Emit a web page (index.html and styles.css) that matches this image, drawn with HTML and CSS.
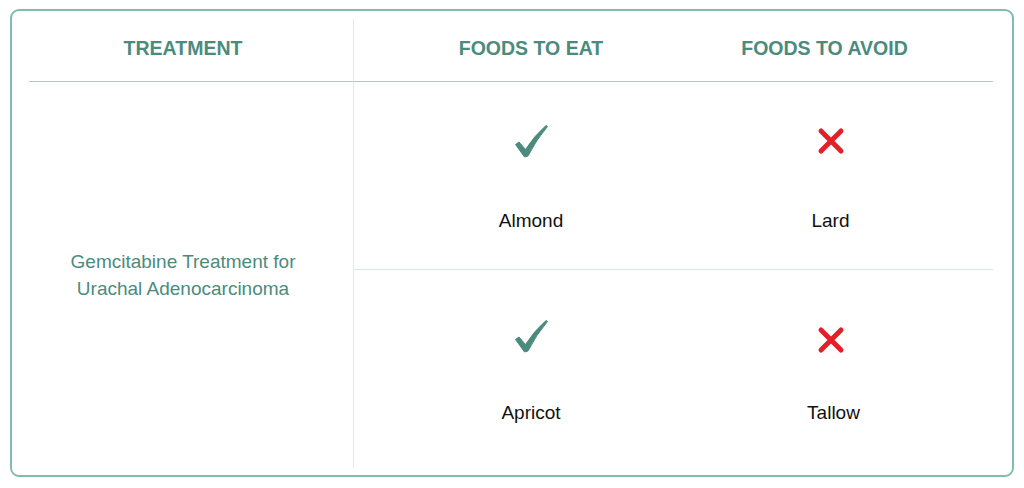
FILE: index.html
```html
<!DOCTYPE html>
<html lang="en">

<head>
  <meta charset="UTF-8">
  <meta name="viewport" content="width=device-width, initial-scale=1.0">
  <title>Food table</title>
  <link rel="stylesheet" href="styles.css">
</head>

<body>
  <div class="table">
    <div class="head col_first">TREATMENT</div>
    <div class="head">FOODS TO EAT</div>
    <div class="head head_last">FOODS TO AVOID</div>

    <div class="treatment">Gemcitabine Treatment for<br>Urachal Adenocarcinoma</div>

    <div class="cell row_one">
      <div class="icon">
        <svg width="34" height="34" viewBox="0 0 34 34"><path class="check" d="M1.5 20.5 L5 18 L11.5 25.5 Q20 12 32 1.5 L33.5 2.5 Q22 16 14 32 L10.5 33 Z"/></svg>
      </div>
      <div class="food">Almond</div>
    </div>
    <div class="cell row_one col_last">
      <div class="icon">
        <svg width="34" height="34" viewBox="0 0 34 34"><path class="cross" d="M7 7 L27 27 M27 7 L7 27"/></svg>
      </div>
      <div class="food">Lard</div>
    </div>

    <div class="cell row_two">
      <div class="icon">
        <svg width="34" height="34" viewBox="0 0 34 34"><path class="check" d="M1.5 20.5 L5 18 L11.5 25.5 Q20 12 32 1.5 L33.5 2.5 Q22 16 14 32 L10.5 33 Z"/></svg>
      </div>
      <div class="food">Apricot</div>
    </div>
    <div class="cell row_two col_last">
      <div class="icon icon_low">
        <svg width="34" height="34" viewBox="0 0 34 34"><path class="cross" d="M7 7 L27 27 M27 7 L7 27"/></svg>
      </div>
      <div class="food food_wide">Tallow</div>
    </div>
  </div>
</body>

</html>
```

FILE: styles.css
```css
body {
  margin: 0;
  background: #fff;
  font-family: 'Liberation Sans', Arial, sans-serif;
}

/* 外框 */
.table {
  margin: 9px 10px;
  width: 1004px;
  height: 468px;
  box-sizing: border-box;
  border: 2px solid #82bcae;
  border-radius: 9px;
  padding: 8px 19px 7px 17px;
  display: grid;
  grid-template-columns: 325px 354px 1fr;
  grid-template-rows: 63px 188px 198px;
}

/* 表頭 */
.head {
  display: flex;
  align-items: center;
  justify-content: center;
  padding-bottom: 4px;
  box-sizing: border-box;
  border-bottom: 1px solid #a6d0c6;
  color: #4b8b7e;
  font-weight: 700;
  font-size: 19.5px;
}

.col_first {
  border-right: 1px solid #dcede8;
  padding-right: 16px;
}

.head_last {
  padding-right: 52px;
}

.treatment {
  grid-row: 2 / 4;
  border-right: 1px solid #dcede8;
  display: flex;
  align-items: center;
  justify-content: center;
  text-align: center;
  padding-right: 16px;
  padding-bottom: 1px;
  color: #4b8b7e;
  font-size: 19px;
  line-height: 27px;
}

/* 食物格 */
.cell {
  display: flex;
  flex-direction: column;
  align-items: center;
  box-sizing: border-box;
}

.col_last {
  padding-right: 40px;
}

.row_one {
  padding-top: 42px;
  border-bottom: 1px solid #d5eae4;
}

.row_one .food {
  margin-top: 52px;
}

.row_two {
  padding-top: 49px;
}

.row_two .food {
  margin-top: 49px;
}

.icon {
  width: 34px;
  height: 34px;
}

.icon svg {
  display: block;
}

.icon_low svg {
  margin-top: 4px;
}

.food_wide {
  margin-left: 6px;
}

.check {
  fill: #4b8b7e;
  stroke: #4b8b7e;
  stroke-width: 1;
  stroke-linejoin: round;
}

.cross {
  fill: none;
  stroke: #e3202a;
  stroke-width: 5;
  stroke-linecap: round;
}

.food {
  font-size: 19px;
  line-height: 22px;
  color: #111;
}
```
